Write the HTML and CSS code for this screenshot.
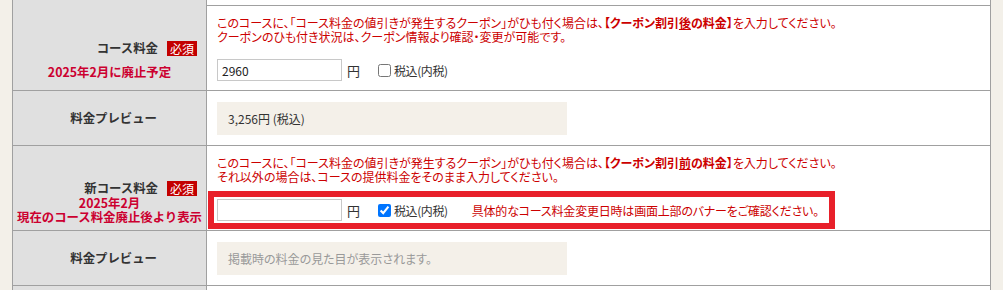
FILE: index.html
```html
<!DOCTYPE html>
<html lang="ja">
<head>
<meta charset="utf-8">
<title>コース料金</title>
<link rel="stylesheet" href="styles.css">
</head>
<body>
<div class="page">
  <div class="table">
    <div class="row row-stub">
      <div class="label"></div>
      <div class="content"></div>
    </div>

    <div class="row">
      <div class="label label-top">
        <div class="title"><span>コース料金</span><span class="badge">必須</span></div>
        <div class="note note-one">2025年2月に廃止予定</div>
      </div>
      <div class="content">
        <p class="msg">このコースに、「コース料金の値引きが発生するクーポン」がひも付く場合は、<b>【クーポン割引<u>後</u>の料金】</b>を入力してください。<br>クーポンのひも付き状況は、クーポン情報より確認・変更が可能です。</p>
        <div class="field">
          <input class="price" type="text" value="2960">
          <span class="yen">円</span>
          <label class="tax"><input type="checkbox"><span>税込(内税)</span></label>
        </div>
      </div>
    </div>

    <div class="row row-preview">
      <div class="label label-mid"><span class="title-plain">料金プレビュー</span></div>
      <div class="content content-preview">
        <div class="preview">3,256円 (税込)</div>
      </div>
    </div>

    <div class="row">
      <div class="label label-top">
        <div class="title"><span>新コース料金</span><span class="badge">必須</span></div>
        <div class="note note-two">2025年2月<br>現在のコース料金廃止後より表示</div>
      </div>
      <div class="content">
        <p class="msg">このコースに、「コース料金の値引きが発生するクーポン」がひも付く場合は、<b>【クーポン割引<u>前</u>の料金】</b>を入力してください。<br>それ以外の場合は、コースの提供料金をそのまま入力してください。</p>
        <div class="field field-alert">
          <input class="price" type="text" value="">
          <span class="yen">円</span>
          <label class="tax"><input type="checkbox" checked><span>税込(内税)</span></label>
          <span class="alert-text">具体的なコース料金変更日時は画面上部のバナーをご確認ください。</span>
        </div>
      </div>
    </div>

    <div class="row row-preview">
      <div class="label label-mid"><span class="title-plain">料金プレビュー</span></div>
      <div class="content content-preview">
        <div class="preview preview-empty">掲載時の料金の見た目が表示されます。</div>
      </div>
    </div>

    <div class="row row-stub">
      <div class="label"></div>
      <div class="content"></div>
    </div>
  </div>
</div>
</body>
</html>
```

FILE: styles.css
```css
* { box-sizing: border-box; }

html, body {
  margin: 0;
  padding: 0;
  background: #f3f0e9;
}

body {
  font-family: "Noto Sans CJK JP", "Noto Sans", sans-serif;
  font-size: 12px;
  color: #333;
  height: 290px;
  overflow: hidden;
}

.page {
  padding: 0 12px;
}

.table {
  background: #fff;
  border-left: 1px solid #a0a0a0;
  border-right: 1px solid #a0a0a0;
}

.row {
  display: grid;
  grid-template-columns: 194px 1fr;
  border-bottom: 1px solid #a0a0a0;
}

.row-stub {
  height: 6px;
}

.row-stub:last-child {
  height: 10px;
  border-bottom: 0;
}

.label {
  background: #e0e0e0;
  border-right: 1px solid #a0a0a0;
  font-weight: bold;
  color: #333;
  font-size: 12.4px;
}

.label-top {
  display: flex;
  flex-direction: column;
  padding: 35px 9px 0 0;
}

.title {
  display: flex;
  justify-content: flex-end;
  align-items: center;
  gap: 9px;
  line-height: 15px;
}

.badge {
  display: inline-block;
  background: #c30000;
  color: #fff;
  font-weight: normal;
  font-size: 12px;
  width: 30px;
  height: 15px;
  line-height: 15px;
  text-align: center;
}

.note {
  color: #cc0030;
  text-align: center;
  line-height: 14px;
  margin-right: -9px;
}

.note-one {
  margin-top: 9px;
}

.note-two {
  margin-top: 0;
}

.label-mid {
  display: flex;
  align-items: center;
  justify-content: flex-end;
  padding-right: 49px;
}

.content {
  padding: 10px 10px 1px;
}

.msg {
  margin: 0;
  color: #cc0000;
  line-height: 14px;
  font-size: 12px;
  font-feature-settings: "palt";
}

.msg b {
  font-weight: bold;
}

.msg u {
  text-decoration: underline;
}

.field {
  display: flex;
  align-items: center;
  width: fit-content;
  margin: 7px 0 0 -9px;
  border: 6px solid transparent;
  padding: 0 10px 0 3px;
  height: 38px;
}

.field-alert {
  border-color: #e8202a;
}

.price {
  width: 125px;
  height: 22px;
  border: 1px solid #c8c8c8;
  padding: 0 4px;
  font-family: "Noto Sans CJK JP", sans-serif;
  font-size: 12px;
  color: #222;
  margin: 0;
  outline: none;
}

.yen {
  margin-left: 5px;
  font-size: 13px;
  color: #333;
}

.tax {
  display: inline-flex;
  align-items: center;
  margin-left: 18px;
  color: #333;
  font-size: 12px;
  letter-spacing: -0.4px;
  font-feature-settings: "palt";
}

.tax input {
  width: 13px;
  height: 13px;
  margin: 0 3px 0 0;
}

.alert-text {
  margin-left: 24px;
  color: #cc0000;
  font-size: 12px;
  letter-spacing: -0.2px;
  font-feature-settings: "palt";
}

.content-preview {
  padding: 11px 10px 10px;
}

.preview {
  width: 350px;
  height: 33px;
  background: #f4f0e9;
  padding: 0 11px;
  display: flex;
  align-items: center;
  color: #333;
  font-size: 12px;
}

.preview-empty {
  color: #999;
  font-feature-settings: "palt";
}
```
